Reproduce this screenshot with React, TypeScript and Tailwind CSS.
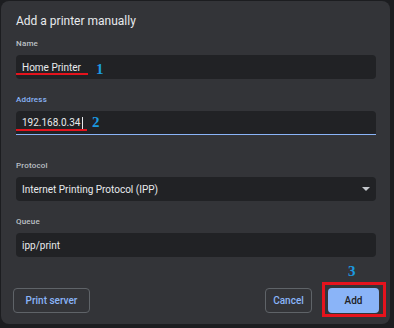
import React from "react";

// small field label
function Label({ text, active }: { text: string; active?: boolean }) {
  return (
    <div
      className={`text-[8px] leading-[12px] font-medium tracking-[0.2px] ${
        active ? "text-[#8ab4f8]" : "text-[#bdc1c6]"
      }`}
    >
      {text}
    </div>
  );
}

// blue step number drawn over the screenshot
function Step({ n, className }: { n: string; className: string }) {
  return (
    <span
      className={`absolute text-[15px] leading-[15px] font-bold text-[#1b9ae0] ${className}`}
      style={{ fontFamily: "'Liberation Serif', serif" }}
    >
      {n}
    </span>
  );
}

export default function App() {
  return (
    <div
      className="w-[394px] h-[328px] bg-[#1c1d20] pt-[1px] pl-[1px]"
      style={{ fontFamily: "Roboto, 'Liberation Sans', sans-serif" }}
    >
      <div className="relative w-[389px] h-[323px] rounded-[8px] bg-[#333438] pl-[15px] pr-[14px] pt-[12px] flex flex-col">
        <div className="text-[12px] leading-[16px] text-[#e8eaed]">Add a printer manually</div>

        {/* Name */}
        <div className="mt-[9px]">
          <Label text="Name" />
        </div>
        <div className="relative mt-[5px] h-[24px] rounded-[4px] bg-[#212225] flex items-center pl-[6px] text-[10px] text-[#e8eaed]">
          Home Printer
          <div className="absolute left-0 top-[18px] w-[72px] h-[2px] bg-[#e5131d]" />
          <Step n="1" className="left-[80px] top-[7px]" />
        </div>

        {/* Address */}
        <div className="mt-[15px]">
          <Label text="Address" active />
        </div>
        <div className="relative mt-[5px] h-[24px] rounded-t-[4px] bg-[#212225] border-b border-[#8ab4f8] flex items-center pl-[6px] text-[10px] text-[#e8eaed]">
          192.168.0.34
          <span className="inline-block ml-[1px] w-[1px] h-[12px] bg-[#e8eaed]" />
          <div className="absolute left-0 top-[18px] w-[71px] h-[2px] bg-[#e5131d]" />
          <Step n="2" className="left-[76px] top-[4px]" />
        </div>

        {/* Protocol */}
        <div className="mt-[25px]">
          <Label text="Protocol" />
        </div>
        <div className="mt-[5px] h-[24px] rounded-[4px] bg-[#212225] flex items-center justify-between pl-[6px] pr-[6px] text-[10px] text-[#e8eaed]">
          <span>Internet Printing Protocol (IPP)</span>
          <svg width="8" height="4" viewBox="0 0 8 4">
            <path d="M0 0 L8 0 L4 4 Z" fill="#c4c7cc" />
          </svg>
        </div>

        {/* Queue */}
        <div className="mt-[15px]">
          <Label text="Queue" />
        </div>
        <div className="mt-[5px] h-[24px] rounded-[4px] bg-[#212225] flex items-center pl-[6px] text-[10px] text-[#e8eaed]">
          ipp/print
        </div>

        {/* Footer */}
        <div className="mt-[30px] -ml-[3px] -mr-[3px] flex items-center">
          <button className="w-[77px] h-[25px] rounded-[4px] border border-[#5f6368] text-[10px] font-medium text-[#8ab4f8]">
            Print server
          </button>
          <div className="flex-1" />
          <button className="w-[47px] h-[25px] rounded-[4px] border border-[#5f6368] text-[10px] font-medium text-[#8ab4f8]">
            Cancel
          </button>
          <div className="relative ml-[16px]">
            <button className="w-[51px] h-[25px] rounded-[4px] bg-[#8ab4f8] text-[10px] font-medium text-[#202124]">
              Add
            </button>
            <div className="absolute -left-[6px] -top-[5px] w-[64px] h-[35px] border-[3px] border-[#e5131d]" />
            <Step n="3" className="left-[20px] -top-[23px]" />
          </div>
        </div>
      </div>
    </div>
  );
}
